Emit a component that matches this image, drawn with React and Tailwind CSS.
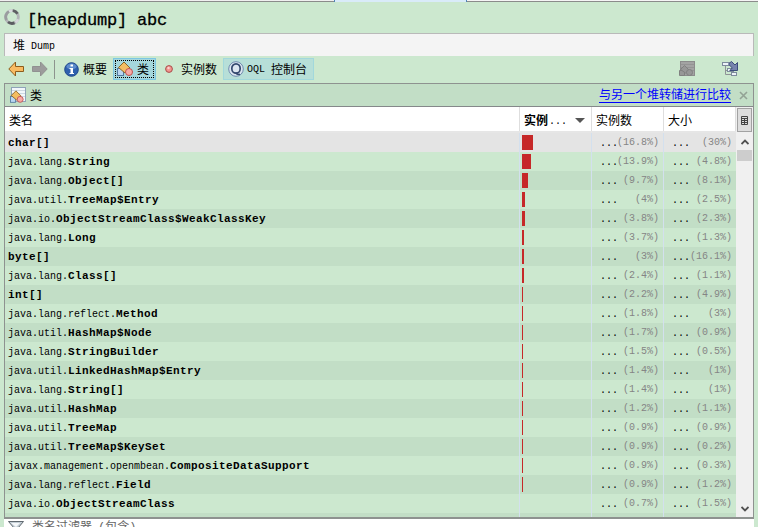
import React from 'react';

const rows = [
  ['', 'char[]', 11, '(16.8%)', '(30%)'],
  ['java.lang.', 'String', 9, '(13.9%)', '(4.8%)'],
  ['java.lang.', 'Object[]', 6, '(9.7%)', '(8.1%)'],
  ['java.util.', 'TreeMap$Entry', 3, '(4%)', '(2.5%)'],
  ['java.io.', 'ObjectStreamClass$WeakClassKey', 3, '(3.8%)', '(2.3%)'],
  ['java.lang.', 'Long', 2, '(3.7%)', '(1.3%)'],
  ['', 'byte[]', 2, '(3%)', '(16.1%)'],
  ['java.lang.', 'Class[]', 2, '(2.4%)', '(1.1%)'],
  ['', 'int[]', 1, '(2.2%)', '(4.9%)'],
  ['java.lang.reflect.', 'Method', 1, '(1.8%)', '(3%)'],
  ['java.util.', 'HashMap$Node', 1, '(1.7%)', '(0.9%)'],
  ['java.lang.', 'StringBuilder', 1, '(1.5%)', '(0.5%)'],
  ['java.util.', 'LinkedHashMap$Entry', 1, '(1.4%)', '(1%)'],
  ['java.lang.', 'String[]', 1, '(1.4%)', '(1%)'],
  ['java.util.', 'HashMap', 1, '(1.2%)', '(1.1%)'],
  ['java.util.', 'TreeMap', 1, '(0.9%)', '(0.9%)'],
  ['java.util.', 'TreeMap$KeySet', 1, '(0.9%)', '(0.2%)'],
  ['javax.management.openmbean.', 'CompositeDataSupport', 1, '(0.9%)', '(0.3%)'],
  ['java.lang.reflect.', 'Field', 1, '(0.9%)', '(1.2%)'],
  ['java.io.', 'ObjectStreamClass', 0, '(0.7%)', '(1.5%)'],
];

function Shapes() {
  return (
    <g>
      <rect x="0.5" y="7.5" width="6" height="7" fill="#b9d6f2" stroke="#53799f" />
      <path d="M7 1 L13 7 L8 12 L1.5 6.5 Z" fill="#f3bd62" stroke="#8a6425" />
      <circle cx="12" cy="11" r="3.5" fill="#f7a9a5" stroke="#c2504e" />
    </g>
  );
}

function ClassIcon() {
  return (
    <svg width="16" height="16" viewBox="0 0 16 16" className="shrink-0"><Shapes /></svg>
  );
}

function ClassTableIcon({ muted }) {
  const line = muted ? '#8c8c8c' : '#8fa3b8';
  return (
    <svg width="16" height="16" viewBox="0 0 16 16" className="shrink-0">
      <rect x="1.5" y="0.5" width="14" height="14" fill={muted ? '#a3a3a3' : '#f2f7fb'} stroke={line} />
      <path d="M2 3.5H15M2 6.5H15M2 9.5H15" stroke={muted ? '#949494' : '#ccd8e2'} />
      {muted ? (
        <g fill="#979797" stroke="#808080">
          <path d="M0.500 9.500h5v5h-5z" />
          <path d="M5.500 4.500L10 9L6.500 12L1.500 8.500Z" />
          <circle cx="10.500" cy="11.500" r="3" />
        </g>
      ) : (
        <g transform="translate(0 3) scale(0.850)"><Shapes /></g>
      )}
    </svg>
  );
}

function SpinnerIcon() {
  return (
    <svg width="16" height="16" viewBox="0 0 16 16" fill="none" strokeWidth="2.800" className="shrink-0">
      <circle cx="8" cy="8" r="6.400" stroke="#b2b5b7" />
      <path d="M2.500 11A6.400 6.400 0 0 1 5 2.400" stroke="#9a9c9f" />
      <path d="M5 2.400A6.400 6.400 0 0 1 8 1.600" stroke="#d9dcde" />
      <path d="M9 1.700A6.400 6.400 0 0 1 13.500 4.800" stroke="#5e6063" />
      <path d="M4 13A6.400 6.400 0 0 0 10.500 13.900" stroke="#5b5d61" />
      <path d="M11.500 13.300A6.400 6.400 0 0 0 14 10.200" stroke="#d5d8da" />
    </svg>
  );
}

function ArrowIcon({ back }) {
  return (
    <svg width="17" height="16" viewBox="0 0 17 16" className="shrink-0">
      {back ? (
        <path d="M0.800 8L7.500 1V5.500H15.500V10.500H7.500V15Z" fill="#f9bb62" stroke="#8d5c1c" strokeLinejoin="round" />
      ) : (
        <path d="M16.200 8L9.500 1V5.500H1.500V10.500H9.500V15Z" fill="#9c9c9c" stroke="#919191" strokeLinejoin="round" />
      )}
    </svg>
  );
}

function InfoIcon() {
  return (
    <svg width="15" height="15" viewBox="0 0 15 15" className="shrink-0">
      <circle cx="7.500" cy="7.500" r="6.800" fill="#2f61ae" stroke="#1f468b" />
      <ellipse cx="7.500" cy="4.500" rx="5" ry="3" fill="#5d8ccc" />
      <path d="M6.500 2.500h2.500v2H6.500zM5.500 6H9v5h1v1H5.500v-1h1V7h-1z" fill="#fff" />
    </svg>
  );
}

function QueryIcon() {
  return (
    <svg width="16" height="16" viewBox="0 0 16 16" fill="none" className="shrink-0">
      <circle cx="8" cy="8" r="7.300" fill="#dce6f0" stroke="#6f8aad" />
      <ellipse cx="8" cy="7.500" rx="4.200" ry="4.700" stroke="#34496f" strokeWidth="1.700" />
      <path d="M7.500 11.800Q9 13.800 12 13.300" stroke="#34496f" strokeWidth="1.500" />
    </svg>
  );
}

function TreeIcon() {
  return (
    <svg width="17" height="16" viewBox="0 0 17 16" className="shrink-0">
      <path d="M3.500 5V13.500H10M4 9.500H7" fill="none" stroke="#8e9297" />
      <g fill="#edf3f8" stroke="#7d8b9c">
        <rect x="0.500" y="1.500" width="7" height="3" />
        <rect x="5.500" y="7.500" width="6" height="3" />
        <rect x="9.500" y="11.500" width="5" height="3" />
      </g>
      <path d="M7.500 2L9.500 0.500L13 4L15.500 1.500V9.500H7.800L10.300 7L6.500 3Z" fill="#7784ad" stroke="#3c4d7b" />
    </svg>
  );
}

function FilterIcon() {
  return (
    <svg width="17" height="16" viewBox="0 0 17 16" className="shrink-0">
      <path d="M0.500 0.500H15.500L10 7V14L6 11V7Z" fill="#c4ced6" stroke="#606970" />
      <path d="M3 2H12L8 6Z" fill="#f5f8fa" />
    </svg>
  );
}

function HeadCell({ children, className }) {
  return (
    <div className={`flex h-full shrink-0 items-center border-r-[1px] border-[#dedede] pt-[6px] ${className}`}>{children}</div>
  );
}

function NumberCell({ value, className }) {
  return (
    <div className={`flex h-full shrink-0 justify-between pl-[8px] text-[#858585] ${className}`}>
      <span className="pt-px text-black">...</span>
      <span className="-ml-[3px]">{value}</span>
    </div>
  );
}

function Row({ row, index }) {
  const bg = index === 0 ? 'bg-[#e4e4e4]' : index % 2 ? 'bg-[#cce8cf]' : 'bg-[#c2dec6]';
  return (
    <div className={`flex h-[19px] shrink-0 text-[10px] leading-[20px] ${bg}`}>
      <div className="w-[515px] shrink-0 border-r border-[#d3e0ee] pl-[3px] whitespace-pre">
        <span>{row[0]}</span>
        <span className="text-[11px] font-bold tracking-[0.4px]">{row[1]}</span>
      </div>
      <div className="w-[72px] shrink-0 border-r border-[#d3e0ee] pt-[2px] pl-[2px]">
        <div className="h-[15px] bg-[#c62828]" style={{ width: row[2] }} />
      </div>
      <NumberCell value={row[3]} className="w-[72px] border-r border-[#d3e0ee] pr-[4px]" />
      <NumberCell value={row[4]} className="w-[72px] pr-[4px]" />
    </div>
  );
}

export default function App() {
  return (
    <div className="flex h-[527px] w-[758px] flex-col overflow-hidden bg-[#cce8cf] font-['Liberation_Mono','Noto_Sans_CJK_SC',monospace] text-[12px] leading-none text-black">
      <div className="flex h-[2px] shrink-0">
        <div className="w-[334px] border-b border-[#8b8b8b] bg-[#f0f0f0]" />
        <div className="w-[133px] border-x border-[#4f86b5] bg-[#d9ebf9]" />
        <div className="grow border-b border-[#8b8b8b] bg-[#f5f5f5]" />
      </div>
      <div className="flex h-[31px] shrink-0 pt-[7px] pl-[4px]">
        <SpinnerIcon />
        <h1 className="ml-[7px] text-[17px] leading-[23px] font-medium tracking-[-0.2px] whitespace-pre [-webkit-text-stroke:0.3px_black]">[heapdump] abc</h1>
      </div>
      <div className="mx-[4px] flex h-[23px] shrink-0 items-center border border-b-0 border-[#b9b9b9] bg-[#f4f4f4] pt-[3px] pl-[8px]">
        <span>堆</span>
        <span className="ml-[6px] text-[10px]">Dump</span>
      </div>
      <div className="mx-[4px] flex h-[27px] shrink-0 items-center pb-[1px]">
        <div className="flex w-[50px] gap-[6px] pl-[4px]"><ArrowIcon back /><ArrowIcon /></div>
        <div className="h-[19px] w-px bg-[#8d948e]" />
        <div className="ml-[9px] flex w-[50px] items-center"><InfoIcon /><span className="ml-[4px] pt-[3px] whitespace-nowrap">概要</span></div>
        <div className="-ml-[1px] flex h-[22px] w-[43px] items-center border border-[#7dc7e3] bg-[#a5d7dc] p-px">
          <div className="flex h-full w-full items-center border border-dotted border-black pl-[1px]"><ClassIcon /><span className="ml-[4px] pt-[3px]">类</span></div>
        </div>
        <div className="ml-[9px] flex w-[58px] items-center">
          <svg width="8" height="8" viewBox="0 0 8 8" className="shrink-0"><circle cx="4" cy="4" r="3.400" fill="#f3958f" stroke="#a74e4b" /><circle cx="3.500" cy="3" r="1.200" fill="#fbd2cd" /></svg>
          <span className="ml-[8px] pt-[3px] whitespace-nowrap">实例数</span>
        </div>
        <div className="flex h-[22px] w-[91px] items-center border border-[#a2d8dc] bg-[#b7dfd8] pl-[4px]">
          <QueryIcon /><span className="ml-[3px] pt-[2px] text-[10px]">OQL</span><span className="ml-[6px] pt-[3px] whitespace-nowrap">控制台</span>
        </div>
        <div className="ml-auto flex gap-[27px] pr-[15px]"><ClassTableIcon muted /><TreeIcon /></div>
      </div>
      <div className="mx-[4px] flex h-[436px] shrink-0 flex-col border border-b-2 border-[#8e9290]">
        <div className="flex h-[22px] shrink-0 items-center bg-[#c2dec6] pl-[5px]">
          <ClassTableIcon /><span className="ml-[4px] pt-[3px]">类</span>
          <a className="mr-[8px] ml-auto border-b border-[#0000ff] pt-[3px] whitespace-nowrap text-[#0000ff]">与另一个堆转储进行比较</a>
          <svg width="9" height="9" viewBox="0 0 9 9" className="mr-[5px]"><path d="M1 1L8 8M8 1L1 8" stroke="#93a395" strokeWidth="1.600" /></svg>
        </div>
        <div className="h-px shrink-0 bg-[#85888a]" />
        <div className="flex min-h-0 grow">
          <div className="flex w-[731px] shrink-0 flex-col overflow-hidden bg-[#c2dec6]">
            <div className="flex h-[26px] shrink-0 border-b-2 border-[#e6e6e6] bg-white">
              <HeadCell className="w-[515px] pl-[4px]">类名</HeadCell>
              <HeadCell className="w-[72px] pl-[4px] font-bold">
                <span className="whitespace-nowrap">实例</span>
                <span className="ml-px text-[10px] font-normal">...</span>
                <svg width="10" height="5" viewBox="0 0 10 5" className="mb-[3px] ml-[8px]"><path d="M0 0H10L5 5Z" fill="#555" /></svg>
              </HeadCell>
              <HeadCell className="w-[72px] pl-[4px]">实例数</HeadCell>
              <HeadCell className="w-[72px] pl-[4px]">大小</HeadCell>
            </div>
            {rows.map((row, i) => <Row key={row[0] + row[1]} row={row} index={i} />)}
            <div className="flex grow">
              <div className="w-[515px] border-r border-[#d3e0ee]" />
              <div className="w-[72px] border-r border-[#d3e0ee]" />
              <div className="w-[72px] border-r border-[#d3e0ee]" />
            </div>
          </div>
          <div className="flex grow flex-col items-center bg-[#f0f0f0]">
            <div className="mt-px flex h-[24px] w-[15px] shrink-0 items-center justify-center border border-[#a2a2a2] bg-[#dedede]">
              <svg width="7" height="9" viewBox="0 0 7 9" fill="none" stroke="#444"><path d="M0.500 0.500H6.500V8.500H0.500ZM0 2.500H7M0 4.500H7M0 6.500H7M3.500 2V9" /></svg>
            </div>
            <svg width="8" height="6" viewBox="0 0 8 6" className="mt-[7px] shrink-0" fill="none" stroke="#505050" strokeWidth="1.800"><path d="M0.500 5L4 1.500L7.500 5" /></svg>
            <div className="mt-[5px] h-[11px] w-[15px] shrink-0 bg-[#cdcdcd]" />
            <svg width="8" height="6" viewBox="0 0 8 6" className="mt-auto mb-[5px] shrink-0" fill="none" stroke="#505050" strokeWidth="1.800"><path d="M0.500 1L4 4.500L7.500 1" /></svg>
          </div>
        </div>
      </div>
      <div className="mx-[4px] flex h-[16px] shrink-0 bg-white pt-[2px] pl-[4px] text-[#666]">
        <FilterIcon /><span className="ml-[7px] pt-px whitespace-pre">类名过滤器</span><span className="ml-[6px] pt-px whitespace-nowrap">(包含)</span>
      </div>
    </div>
  );
}
